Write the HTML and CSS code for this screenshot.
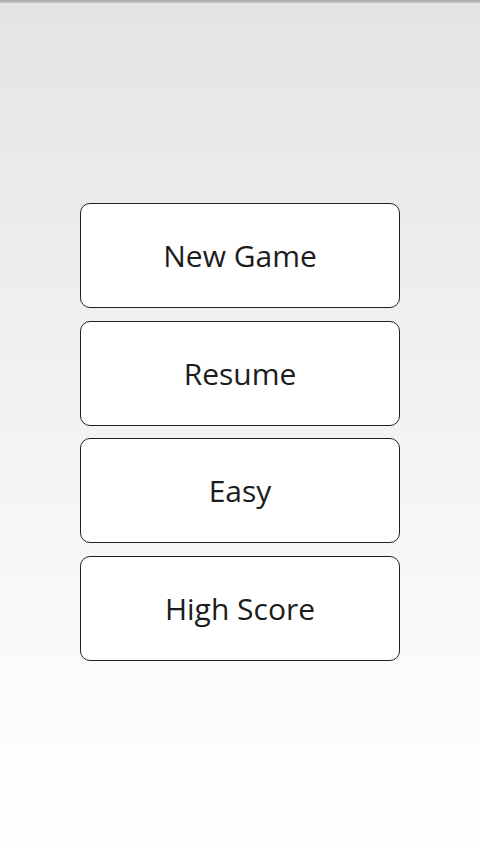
FILE: index.html
```html
<!DOCTYPE html>
<html>
<head>
<meta charset="utf-8">
<link rel="stylesheet" href="styles.css">
</head>
<body>
<div class="screen">
  <div class="topline"></div>
  <div class="menu">
    <button class="btn">New Game</button>
    <button class="btn">Resume</button>
    <button class="btn">Easy</button>
    <button class="btn">High Score</button>
  </div>
</div>
</body>
</html>
```
FILE: styles.css
```css
html, body {
  margin: 0;
  padding: 0;
}
.screen {
  width: 480px;
  height: 853px;
  background: linear-gradient(to bottom, #e4e4e4 0%, #f0f0f0 40%, #fbfbfb 80%, #ffffff 100%);
  display: flex;
  flex-direction: column;
  overflow: hidden;
}
.topline {
  height: 3px;
  background: linear-gradient(to bottom, #a8a8a8, #c8c8c8);
}
.menu {
  display: flex;
  flex-direction: column;
  gap: 12.5px;
  padding: 200px 80px 0 80px;
}
.btn {
  height: 105px;
  box-sizing: border-box;
  border: 1.5px solid #222222;
  border-radius: 10px;
  background: #ffffff;
  font-family: "Open Sans", "Noto Sans", sans-serif;
  font-size: 30px;
  color: #1c1c1c;
  padding: 0;
  margin: 0;
}
```
